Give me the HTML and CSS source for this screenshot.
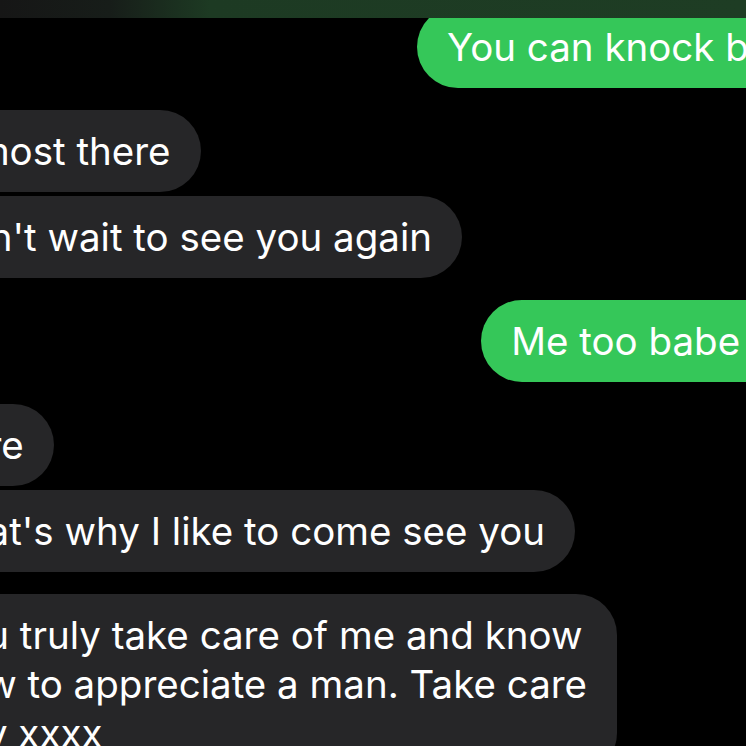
FILE: index.html
```html
<!DOCTYPE html>
<html lang="en">
<head>
	<meta charset="UTF-8">
	<meta name="viewport" content="width=device-width, initial-scale=1.0">
	<title>Messages</title>
	<link rel="stylesheet" href="styles.css">
</head>
<body>

	<!-- blurred nav bar, sits over the thread -->
	<div class="top-bar"></div>

	<div class="thread">
		<div class="bubble sent">You can knock back</div>

		<div class="bubble received group-start">Almost there</div>
		<div class="bubble received">Can't wait to see you again</div>

		<div class="bubble sent group-start">Me too babe xxx</div>

		<div class="bubble received group-start">Sure</div>
		<div class="bubble received">That's why I like to come see you</div>

		<div class="bubble received group-start">You truly take care of me and know<br>how to appreciate a man. Take care<br>boy xxxx</div>
	</div>

</body>
</html>
```

FILE: styles.css
```css
html, body {
	margin: 0;
	padding: 0;
	background: #000;
	overflow: hidden;
}
body {
	width: 746px;
	height: 746px;
	font-family: "Inter", "Noto Sans", sans-serif;
	color: #fff;
}
.top-bar {
	position: fixed;
	top: 0;
	left: 0;
	right: 0;
	height: 18px;
	background: linear-gradient(to right, #161616 0, #171d19 110px, #1d3a23 210px, #1e3d24 100%);
	z-index: 2;
}
.thread {
	display: flex;
	flex-direction: column;
	width: 934px;
	margin-left: -90px;
	padding-top: 6px;
}
.bubble {
	font-size: 38.5px;
	line-height: 49px;
	padding: 17px 30px 16px;
	border-radius: 41px;
	white-space: nowrap;
	margin-top: 4px;
}
.bubble:first-child {
	margin-top: 0;
}
.group-start {
	margin-top: 22px;
}
.received {
	align-self: flex-start;
	background: #262628;
}
.sent {
	align-self: flex-end;
	background: #35c759;
}
```
